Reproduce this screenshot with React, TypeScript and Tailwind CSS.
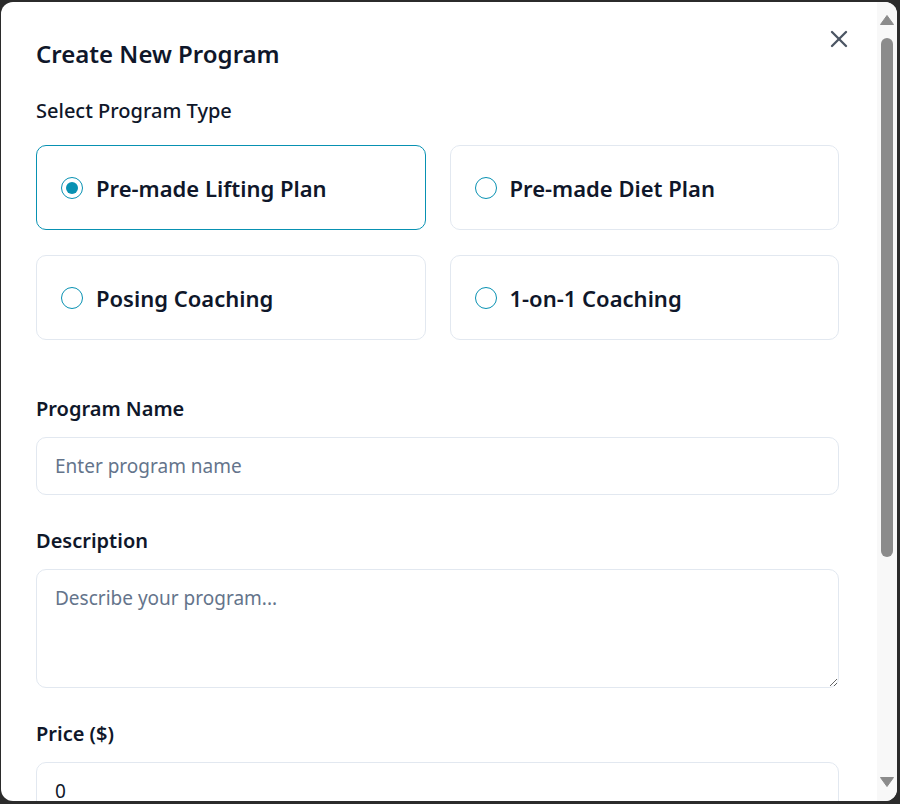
import React, { useState } from "react";
import { X } from "lucide-react";

const types = [
  "Pre-made Lifting Plan",
  "Pre-made Diet Plan",
  "Posing Coaching",
  "1-on-1 Coaching",
];

function Field({ label, first, children }: { label: string; first?: boolean; children: React.ReactNode }) {
  return (
    <div className={"flex flex-col " + (first ? "" : "mt-8")}>
      <label className="text-[20px] leading-[28px] font-semibold text-[#0f172a]">{label}</label>
      <div className="mt-[14px]">{children}</div>
    </div>
  );
}

function Scrollbar() {
  return (
    <div className="w-[20px] shrink-0 bg-[#f8f8f8] flex flex-col">
      <div className="h-[36px] flex justify-center pt-[13px]">
        <svg width="14" height="10" viewBox="0 0 14 10">
          <path d="M7 0.5 L13.5 9.5 H0.5 Z" fill="#8b8b8b" stroke="#8b8b8b" strokeLinejoin="round" />
        </svg>
      </div>
      <div className="flex-1 px-[4px]">
        <div className="h-[519px] rounded-full bg-[#8b8b8b]" />
      </div>
      <div className="h-[36px] flex justify-center pt-[12px]">
        <svg width="14" height="10" viewBox="0 0 14 10">
          <path d="M0.5 0.5 H13.5 L7 9.5 Z" fill="#8b8b8b" stroke="#8b8b8b" strokeLinejoin="round" />
        </svg>
      </div>
    </div>
  );
}

export default function App() {
  const [selected, setSelected] = useState(0);
  return (
    <div
      className="fixed inset-0 bg-[#2b2b2b] flex items-start justify-start pt-[2px] pl-[1px]"
      style={{ fontFamily: '"Noto Sans", "Open Sans", sans-serif' }}
    >
      <div className="w-[896px] h-[799px] bg-white rounded-xl overflow-hidden flex">
        <div className="relative flex-1 overflow-hidden">
          <div className="pl-[35px] pr-[38px] pt-[36px] pb-[297px]">
            <button className="absolute right-[24px] top-[23px] text-[#4b5563]">
              <X size={28} strokeWidth={2} />
            </button>
            <h2 className="text-[24px] leading-[32px] font-semibold text-[#0f172a]">Create New Program</h2>
            <div className="mt-[27px] text-[20px] leading-[28px] font-medium text-[#0f172a]">Select Program Type</div>
            <div className="mt-[20px] grid grid-cols-2 gap-x-6 gap-y-[25px]">
              {types.map((t, i) => (
                <button
                  key={t}
                  onClick={() => setSelected(i)}
                  className={
                    "h-[85px] flex items-center gap-[13px] px-6 rounded-[10px] border text-left " +
                    (selected === i ? "border-[#0891b2]" : "border-[#e2e8f0]")
                  }
                >
                  <span className="w-[22px] h-[22px] rounded-full border-[1.5px] border-[#0891b2] flex items-center justify-center shrink-0">
                    {selected === i && <span className="w-[12px] h-[12px] rounded-full bg-[#0891b2]" />}
                  </span>
                  <span className="text-[22px] leading-[30px] font-semibold text-[#0f172a]">{t}</span>
                </button>
              ))}
            </div>
            <div className="mt-[55px]">
              <Field label="Program Name" first>
                <input
                  className="w-full h-[58px] rounded-[10px] border border-[#e2e8f0] px-[18px] text-[19px] text-[#0f172a] placeholder:text-[#64748b] outline-none"
                  placeholder="Enter program name"
                />
              </Field>
              <Field label="Description">
                <textarea
                  className="block w-full h-[119px] rounded-[10px] border border-[#e2e8f0] px-[18px] py-[14px] text-[19px] text-[#0f172a] placeholder:text-[#64748b] outline-none"
                  placeholder="Describe your program..."
                />
              </Field>
              <Field label="Price ($)">
                <input
                  className="w-full h-[58px] rounded-[10px] border border-[#e2e8f0] px-[18px] text-[19px] text-[#0f172a] outline-none"
                  defaultValue="0"
                />
              </Field>
            </div>
          </div>
        </div>
        <Scrollbar />
      </div>
    </div>
  );
}
